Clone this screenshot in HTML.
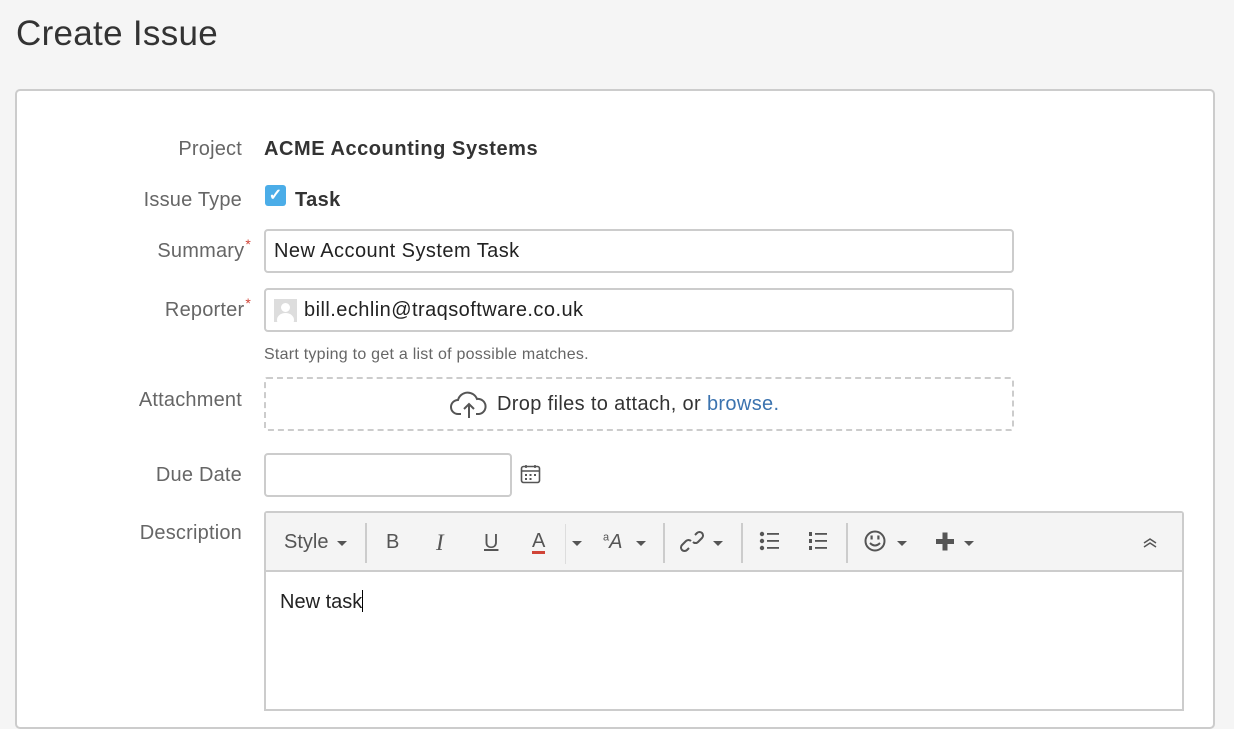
<!DOCTYPE html>
<html><head><meta charset="utf-8"><style>
*{box-sizing:border-box}
body{margin:0;width:1234px;height:671px;overflow:hidden;background:#f5f5f5;font-family:"Liberation Sans",Arial,sans-serif;color:#333}
h1{position:absolute;left:16px;top:14px;margin:0;font-size:35px;letter-spacing:.3px;font-weight:400;color:#333}
.panel{position:absolute;left:15px;top:89px;width:1200px;height:640px;background:#fff;border:2px solid #ccc;border-radius:5px}
.lbl{position:absolute;right:992px;font-size:20px;letter-spacing:.2px;color:#666;text-align:right;white-space:nowrap}
.req{color:#d04437;font-size:14px;position:relative;top:-8px;margin-left:1px}
.abs{position:absolute}
.inp{position:absolute;left:264px;width:750px;height:44px;border:2px solid #ccc;border-radius:4px;font-size:20px;letter-spacing:.45px;padding:9px 8px;color:#222;background:#fff}
.car{position:absolute}
</style></head><body>
<h1>Create Issue</h1>
<div class="panel"></div>
<div class="lbl" style="top:138px">Project</div>
<div class="abs" style="left:264px;top:138px;font-size:20px;letter-spacing:.55px;font-weight:bold;color:#333">ACME Accounting Systems</div>
<div class="lbl" style="top:189px">Issue Type</div>
<div class="abs" style="left:265px;top:185px;width:21px;height:21px;background:#4bade8;border-radius:3px;color:#fff;font-size:16px;line-height:21px;text-align:center;font-weight:bold">✓</div>
<div class="abs" style="left:295px;top:189px;font-size:20px;font-weight:bold;letter-spacing:.4px">Task</div>
<div class="lbl" style="top:240px;right:983px">Summary<span class="req">*</span></div>
<div class="inp" style="top:229px">New Account System Task</div>
<div class="lbl" style="top:299px;right:983px">Reporter<span class="req">*</span></div>
<div class="inp" style="top:288px;padding-left:38px">bill.echlin@traqsoftware.co.uk</div>
<div class="abs" style="left:274px;top:299px;width:23px;height:23px;background:#ddd;overflow:hidden"><div style="position:absolute;left:7px;top:4px;width:9px;height:9px;border-radius:50%;background:#fff"></div><div style="position:absolute;left:3px;top:14px;width:17px;height:14px;border-radius:50%;background:#fff"></div></div>
<div class="abs" style="left:264px;top:346px;font-size:16px;letter-spacing:.25px;color:#666">Start typing to get a list of possible matches.</div>
<div class="lbl" style="top:389px">Attachment</div>
<div class="abs" style="left:264px;top:377px;width:750px;height:54px;border:2px dashed #ccc;border-radius:3px"></div>
<svg class="abs" style="left:449px;top:390px" width="40" height="30" viewBox="0 0 40 30"><path d="M12 24H9a7 7 0 0 1 0-14 10 10 0 0 1 19-1 7.5 7.5 0 0 1 2 15h-3" fill="none" stroke="#555" stroke-width="2"/><path d="M20 28V14M15 19l5-5 5 5" fill="none" stroke="#555" stroke-width="2"/></svg>
<div class="abs" style="left:497px;top:393px;font-size:20px;letter-spacing:.35px;color:#333">Drop files to attach, or <span style="color:#3b73af">browse.</span></div>
<div class="lbl" style="top:464px">Due Date</div>
<div class="abs" style="left:264px;top:453px;width:248px;height:44px;border:2px solid #ccc;border-radius:4px"></div>
<svg class="abs" style="left:520px;top:464px" width="21" height="20" viewBox="0 0 21 20"><rect x="1.5" y="2.5" width="18" height="16" rx="2" fill="none" stroke="#555" stroke-width="1.6"/><path d="M1.5 7h18M6 1v3M15 1v3" stroke="#555" stroke-width="1.6"/><g fill="#555"><rect x="5" y="10" width="2" height="2"/><rect x="9.5" y="10" width="2" height="2"/><rect x="14" y="10" width="2" height="2"/><rect x="5" y="14" width="2" height="2"/><rect x="9.5" y="14" width="2" height="2"/></g></svg>
<div class="lbl" style="top:522px">Description</div>
<div class="abs" style="left:264px;top:511px;width:920px;height:200px;border:2px solid #ccc;border-radius:3px 3px 0 0;background:#fff"></div>
<div class="abs" style="left:266px;top:513px;width:916px;height:59px;background:#f4f4f4;border-bottom:2px solid #ccc"></div>
<div class="abs" style="left:266px;top:513px;height:59px;width:916px;font-size:20px;color:#555">
<span class="abs" style="left:18px;top:18px">Style</span>
<span class="abs" style="left:99px;top:10px;width:2px;height:40px;background:#ccc"></span>
<span class="abs" style="left:120px;top:18px">B</span>
<span class="abs" style="left:170px;top:17px;font-family:'Liberation Serif',serif;font-style:italic;font-size:23px">I</span>
<span class="abs" style="left:218px;top:18px;text-decoration:underline">U</span>
<span class="abs" style="left:266px;top:18px;border-bottom:3px solid #d04437;line-height:20px">A</span>
<span class="abs" style="left:299px;top:11px;width:1px;height:40px;background:#ddd"></span>
<span class="abs" style="left:337px;top:18px;font-style:italic"><sup style="font-size:11px;font-style:normal">a</sup>A</span>
<span class="abs" style="left:397px;top:10px;width:2px;height:40px;background:#ccc"></span>
<span class="abs" style="left:475px;top:10px;width:2px;height:40px;background:#ccc"></span>
<span class="abs" style="left:580px;top:10px;width:2px;height:40px;background:#ccc"></span>
</div>
<svg class="abs" style="left:0;top:0" width="1234" height="671">
<g fill="#555">
<path d="M337 541h10l-5 5z"/><path d="M572 541h10l-5 5z"/><path d="M636 541h10l-5 5z"/><path d="M713 541h10l-5 5z"/><path d="M897 541h10l-5 5z"/><path d="M964 541h10l-5 5z"/>
<circle cx="762" cy="534" r="2.2"/><circle cx="762" cy="541" r="2.2"/><circle cx="762" cy="548" r="2.2"/>
<rect x="767" y="533" width="12" height="1.8"/><rect x="767" y="540" width="12" height="1.8"/><rect x="767" y="547" width="12" height="1.8"/>
<rect x="809" y="532" width="3" height="4"/><rect x="809" y="539" width="3" height="4"/><rect x="809" y="546" width="3" height="4"/>
<rect x="815" y="533" width="12" height="1.8"/><rect x="815" y="540" width="12" height="1.8"/><rect x="815" y="547" width="12" height="1.8"/>
<rect x="936" y="539" width="18" height="5"/><rect x="942.5" y="532.5" width="5" height="18"/>
</g>
<g fill="none" stroke="#555" stroke-width="2">
<path d="M689 548l-2 2a3.5 3.5 0 0 1-5-5l4-4a3.5 3.5 0 0 1 5 0M695 535l2-2a3.5 3.5 0 0 1 5 5l-4 4a3.5 3.5 0 0 1-5 0"/>
<circle cx="875" cy="541" r="9.5"/>
<path d="M870 543q5 5 10 0"/>
<path d="M1144 543l6-4 6 4M1144 547l6-4 6 4" stroke-width="1.5"/>
</g>
<g fill="#555"><rect x="870.5" y="535.5" width="2.2" height="4"/><rect x="877.3" y="535.5" width="2.2" height="4"/></g>
</svg>
<div class="abs" style="left:280px;top:590px;font-size:20px;color:#222">New task<span style="display:inline-block;width:1px;height:22px;background:#000;vertical-align:-4px"></span></div>
</body></html>
